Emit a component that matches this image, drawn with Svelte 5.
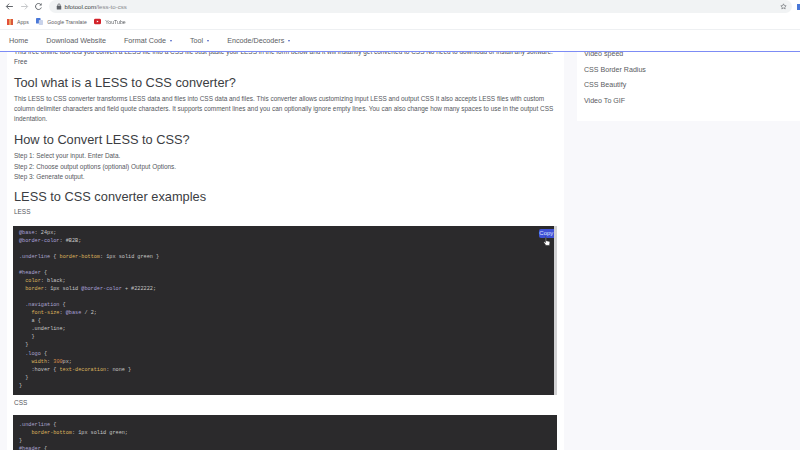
<script>
  const navItems = [
    { label: 'Home' },
    { label: 'Download Website' },
    { label: 'Format Code', caret: true },
    { label: 'Tool', caret: true },
    { label: 'Encode/Decoders', caret: true }
  ];
  const sideLinks = ['Video speed', 'CSS Border Radius', 'CSS Beautify', 'Video To GIF'];
  const appsDots = Array.from({ length: 9 });
</script>

<div class="window">
  <header class="chrome">
    <div class="toolbar">
      <svg class="tb-icon" viewBox="0 0 12 12"><path d="M10.5 6H2M5.5 2.2 1.8 6l3.7 3.8" fill="none" stroke="#5f6368" stroke-width="1.3"/></svg>
      <svg class="tb-icon" viewBox="0 0 12 12"><path d="M1.5 6H10M6.5 2.2 10.2 6 6.5 9.8" fill="none" stroke="#c4c6c9" stroke-width="1.3"/></svg>
      <svg class="tb-icon" viewBox="0 0 12 12"><path d="M9.8 7.4A4 4 0 1 1 9 3.3" fill="none" stroke="#5f6368" stroke-width="1.3"/><path d="M10.2 1.4v3.2H7z" fill="#5f6368"/></svg>
      <div class="omnibox">
        <svg class="lock" viewBox="0 0 8 9"><rect x="1" y="3.6" width="6" height="5" rx=".8" fill="#5f6368"/><path d="M2.4 4V2.6a1.6 1.6 0 0 1 3.2 0V4" fill="none" stroke="#5f6368"/></svg>
        <span class="url"><b>bfotool.com</b>/less-to-css</span>
        <svg class="star" viewBox="0 0 12 12"><path d="m6 1.4 1.4 3 3.2.4-2.4 2.2.7 3.2L6 8.6l-2.9 1.6.7-3.2L1.4 4.8l3.2-.4z" fill="none" stroke="#5f6368" stroke-width="1"/></svg>
      </div>
      <span class="ext"></span>
    </div>
    <div class="bookmarks">
      <span class="bm">
        <span class="apps">{#each appsDots as _, i}<i class:red={i % 3 === 0} class:green={i % 3 === 1} class:yellow={i % 3 === 2}></i>{/each}</span>
        Apps
      </span>
      <span class="bm">
        <svg class="bm-icon" viewBox="0 0 10 10"><rect x="0" y="0" width="6.5" height="8" rx="1" fill="#4a78d8"/><rect x="4" y="3" width="6" height="7" rx="1" fill="#c9d3ea"/></svg>
        Google Translate
      </span>
      <span class="bm">
        <svg class="bm-icon" viewBox="0 0 10 8"><rect width="10" height="8" y="0" rx="2" fill="#d3222a"/><path d="M4 2.4v3.2L6.6 4z" fill="#fff"/></svg>
        YouTube
      </span>
    </div>
  </header>

  <nav class="sitenav">
    {#each navItems as item}
      <span class="nav-item">{item.label}{#if item.caret}<i class="caret"></i>{/if}</span>
    {/each}
  </nav>

  <div class="page">
    <main class="card">
      <p class="intro">This free online tool lets you convert a LESS file into a CSS file Just paste your LESS in the form below and it will instantly get converted to CSS No need to download or install any software. Free</p>
      <h2 class="first">Tool what is a LESS to CSS converter?</h2>
      <p>This LESS to CSS converter transforms LESS data and files into CSS data and files. This converter allows customizing input LESS and output CSS It also accepts LESS files with custom column delimiter characters and field quote characters. It supports comment lines and you can optionally ignore empty lines. You can also change how many spaces to use in the output CSS indentation.</p>
      <h2>How to Convert LESS to CSS?</h2>
      <p>Step 1: Select your input. Enter Data.<br />Step 2: Choose output options (optional) Output Options.<br />Step 3: Generate output.</p>
      <h2>LESS to CSS converter examples</h2>
      <p class="label">LESS</p>
      <div class="codewrap">
        <pre class="code"><span class="v">@base</span><span class="w">: 24px;</span>
<span class="v">@border-color</span><span class="w">: #B2B;</span>

<span class="s">.underline</span> <span class="w">&#123;</span> <span class="k">border-bottom</span><span class="w">: 1px solid green &#125;</span>

<span class="s">#header</span> <span class="w">&#123;</span>
  <span class="k">color</span><span class="w">: black;</span>
  <span class="k">border</span><span class="w">: 1px solid </span><span class="v">@border-color</span><span class="w"> + #222222;</span>

  <span class="s">.navigation</span> <span class="w">&#123;</span>
    <span class="k">font-size</span><span class="w">: </span><span class="v">@base</span><span class="w"> / 2;</span>
    <span class="w">a &#123;</span>
    <span class="w">.underline;</span>
    <span class="w">&#125;</span>
  <span class="w">&#125;</span>
  <span class="s">.logo</span> <span class="w">&#123;</span>
    <span class="k">width</span><span class="w">: </span><span class="n">300</span><span class="w">px;</span>
    <span class="w">:hover &#123; </span><span class="k">text-decoration</span><span class="w">: none &#125;</span>
  <span class="w">&#125;</span>
<span class="w">&#125;</span></pre>
        <span class="copy">Copy</span>
        <svg class="cursor" viewBox="0 0 10 14"><path d="M3 1.2c.7 0 1 .5 1 1V6l3.6.8c.8.2 1.2.7 1.1 1.5L8.2 12H3.6L1 8.2c-.4-.7.5-1.4 1.1-.8l.9 1V2.2c0-.6 0-1 0-1z" fill="#fff" stroke="#222" stroke-width=".7"/></svg>
      </div>
      <p class="label css">CSS</p>
      <pre class="code second"><span class="s">.underline</span> <span class="w">&#123;</span>
    <span class="k">border-bottom</span><span class="w">: 1px solid green;</span>
<span class="w">&#125;</span>
<span class="s">#header</span> <span class="w">&#123;</span></pre>
    </main>
    <aside class="side">
      {#each sideLinks as link}
        <span class="side-link">{link}</span>
      {/each}
    </aside>
  </div>
</div>

<style>
  :global(body) { margin: 0; background: #f8f8fb; }
  .window {
    width: 800px; height: 450px; overflow: hidden; display: flex; flex-direction: column;
    font-family: "Liberation Sans", Arial, sans-serif; color: #44474d; filter: blur(0.45px);
  }
  .chrome { background: #fff; height: 29px; flex: none; }
  .toolbar { display: flex; align-items: center; height: 13px; padding-left: 5px; gap: 5.5px; }
  .tb-icon { width: 9px; height: 9px; flex: none; }
  .omnibox {
    flex: 1; height: 13px; background: #f1f3f4; border-radius: 7px; display: flex; align-items: center;
    padding: 0 5px 0 7px; gap: 3px;
  }
  .lock { width: 6px; height: 7px; }
  .url { font-size: 6.1px; color: #85878b; flex: 1; }
  .url b { font-weight: 400; color: #3c3f43; }
  .star { width: 7px; height: 7px; }
  .ext { width: 3px; height: 6px; background: #4a78d8; }
  .bookmarks { display: flex; align-items: center; height: 17px; padding-left: 7px; gap: 7.5px; font-size: 5.2px; color: #5d6064; }
  .bm { display: flex; align-items: center; gap: 4px; }
  .bm-icon { width: 7px; height: 7px; }
  .apps { display: grid; grid-template-columns: repeat(3, 2px); gap: 0; }
  .apps i { width: 2px; height: 2px; display: block; }
  .red { background: #e2503c; } .green { background: #f0a060; } .yellow { background: #d9583c; }

  .sitenav {
    position: relative; z-index: 2; flex: none; background: #fff; display: flex; align-items: center;
    border-top: 1px solid #eef0f2; border-bottom: 1px solid #7d8cf5; box-sizing: border-box; padding-left: 9px; gap: 18px;
    font-size: 7.2px; color: #5a5d63; height: 23px;
  }
  .nav-item { display: flex; align-items: center; }
  .caret { width: 0; height: 0; margin-left: 4px; border: 1.6px solid transparent; border-top: 2.2px solid #4a62c8; border-bottom: 0; }

  .page { flex: 1; min-height: 0; display: flex; gap: 13px; padding-left: 7px; overflow: hidden; align-items: flex-start; }
  .card { width: 557px; flex: none; background: #fff; padding: 0 7px; box-sizing: border-box; margin-top: -5px; height: 410px; }
  p { margin: 0; font-size: 6.45px; line-height: 10.3px; color: #54575d; }
  .intro { color: #4c4f58; }
  h2 { font-weight: 400; font-size: 12.8px; line-height: 17px; margin: 6.2px 0 3.5px; color: #3b3d42; }
  h2.first { margin: 6.6px 0 2.5px; }
  .label { margin-top: -1.5px; }
  .codewrap { position: relative; margin: 8px 0 0 -0.7px; width: 543.5px; border-right: 3.5px solid #d2d2d4; box-sizing: border-box; }
  .code {
    margin: 0; background: #2b2a2c; font-family: "Liberation Mono", monospace; font-size: 5.2px; line-height: 8.05px;
    padding: 3.2px 5.7px 2px; color: #cfcfcf; height: 169px; box-sizing: border-box; overflow: hidden;
  }
  .second { height: 60px; width: 543.5px; padding-top: 6px; margin: 7px 0 0 -0.7px; }
  .label.css { margin-top: 3px; }
  .s { color: #a9a3cf; } .k { color: #dcb35c; } .v { color: #a8a0d8; } .w { color: #c7c7c7; } .n { color: #d88a4a; }
  .copy {
    position: absolute; top: 3px; right: 0; width: 15px; height: 9px; background: #3f51d6; color: #dfe3ff;
    font-size: 6px; line-height: 8.5px; text-align: center; border-radius: 2px 0 0 2px;
  }
  .cursor { position: absolute; top: 10.5px; right: 2.5px; width: 8px; height: 11px; }
  .side {
    flex: 1; margin-top: -5px; background: #fff; height: 74px; box-sizing: border-box; padding: 2px 7px 0;
    display: flex; flex-direction: column; gap: 5.6px; font-size: 7.1px; line-height: 10px; color: #5a5c62;
  }
  .side-link { display: block; }
</style>
